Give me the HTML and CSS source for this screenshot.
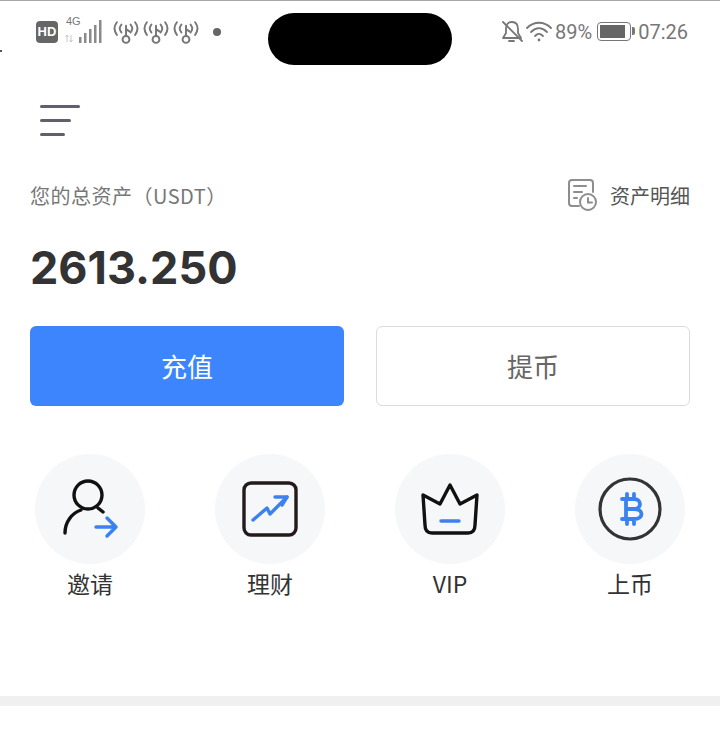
FILE: index.html

```html
<!DOCTYPE html>
<html lang="zh-CN">
<head>
  <meta charset="UTF-8" />
  <meta name="viewport" content="width=device-width, initial-scale=1" />
  <title>资产</title>
  <link rel="stylesheet" href="styles.css">
</head>
<body>
  <div class="statusbar">
    <div class="status-left">
      <span class="hd">HD</span>
      <span class="signal">
        <span class="net">4G</span>
        <svg width="38" height="24" viewBox="0 0 38 24" fill="#8a8a8a">
          <path d="M2 22 L2 15 M0.500 17 L2 15 L3.500 17 M6 15 L6 22 M4.500 20 L6 22 L7.500 20" fill="none" stroke="#c8c8c8" stroke-width="1"/>
          <rect x="14" y="17" width="2.500" height="6"/>
          <rect x="19" y="13" width="2.500" height="10"/>
          <rect x="24" y="9" width="2.500" height="14"/>
          <rect x="29" y="5" width="2.500" height="18"/>
          <rect x="34" y="0" width="2.500" height="23"/>
        </svg>
      </span>
      <span class="hotspots">
        <svg class="hotspot" viewBox="0 0 26 24"><use href="#hotspot"/></svg>
        <svg class="hotspot" viewBox="0 0 26 24"><use href="#hotspot"/></svg>
        <svg class="hotspot" viewBox="0 0 26 24"><use href="#hotspot"/></svg>
      </span>
      <span class="dot"></span>
    </div>
    <div class="status-right">
      <svg width="24" height="24" viewBox="0 0 24 24" fill="none" stroke="#777" stroke-width="1.800" stroke-linecap="round" stroke-linejoin="round">
        <path d="M5 8 C5 5 7 2 11 2 C15 2 17 5 17 9 L17 13 L20 18 L2 18 L5 13 Z"/>
        <path d="M8 21 L13 21"/>
        <path d="M2 2 L21 21"/>
      </svg>
      <svg class="wifi" width="26" height="22" viewBox="0 0 26 22" fill="none" stroke="#777" stroke-width="1.800" stroke-linecap="round">
        <path d="M1 7 C8 0 18 0 25 7"/>
        <path d="M5 11 C10 6 16 6 21 11"/>
        <path d="M9 15 C12 12 14 12 17 15"/>
        <circle cx="13" cy="19" r="1.400" fill="#777" stroke="none"/>
      </svg>
      <span class="pct">89%</span>
      <span class="battery"><span class="battery-fill"></span></span>
      <span class="time">07:26</span>
    </div>
  </div>
  <div class="notch"></div>
  <span class="speck"></span>

  <svg class="defs" width="0" height="0">
    <symbol id="hotspot" viewBox="2 2 22 21">
      <g fill="none" stroke="#777" stroke-width="1.700" stroke-linecap="round">
        <path d="M5 4 C2 8 2 11 5 15"/>
        <path d="M9 6 C7 9 7 10 9 13"/>
        <path d="M21 4 C24 8 24 11 21 15"/>
        <path d="M17 6 C19 9 19 10 17 13"/>
        <path d="M13 7 L13 16"/>
        <path d="M13 10 L16 12"/>
        <circle cx="13" cy="19" r="3"/>
      </g>
    </symbol>
  </svg>

  <div class="page">
    <div class="menu-btn">
      <span class="line line-1"></span>
      <span class="line line-2"></span>
      <span class="line line-3"></span>
    </div>

    <div class="asset-head">
      <span class="asset-label">您的总资产（USDT）</span>
      <span class="asset-detail">
        <svg width="32" height="32" viewBox="0 0 32 32" fill="none" stroke="#8e8e8e" stroke-width="2" stroke-linecap="round">
          <path d="M11 27 L4 27 C2 27 1 26 1 24 L1 4 C1 2 2 1 4 1 L22 1 C24 1 25 2 25 4 L25 13"/>
          <path d="M6 7 L18 7"/>
          <path d="M6 13 L14 13"/>
          <path d="M6 19 L9 19"/>
          <circle cx="20" cy="23" r="8"/>
          <path d="M20 19 L20 23.500 L24 23.500"/>
        </svg>
        资产明细
      </span>
    </div>

    <div class="total">2613.250</div>

    <div class="actions">
      <a class="btn btn-primary">充值</a>
      <a class="btn btn-outline">提币</a>
    </div>

    <div class="shortcuts">
      <div class="shortcut">
        <div class="circle">
          <svg width="60" height="60" viewBox="0 0 60 60" fill="none" stroke-width="3.400" stroke-linecap="round" stroke-linejoin="round">
            <circle cx="28" cy="16" r="14" stroke="#111"/>
            <path d="M5 54 C5 43 12 34 21 31" stroke="#111"/>
            <path d="M38 29 L43 33" stroke="#111"/>
            <path d="M36 48 L56 48 M47 39 L56 48 L47 57" stroke="#3b82f0"/>
          </svg>
        </div>
        <span class="shortcut-name">邀请</span>
      </div>
      <div class="shortcut">
        <div class="circle">
          <svg width="56" height="56" viewBox="0 0 56 56" fill="none" stroke-width="3.400" stroke-linecap="round" stroke-linejoin="round">
            <rect x="2" y="2" width="52" height="52" rx="7" stroke="#241a1a"/>
            <path d="M11 39 L25 27 L28 33 L45 16" stroke="#3b82f0"/>
            <path d="M33 16 L45 16 L40 24" stroke="#3b82f0"/>
          </svg>
        </div>
        <span class="shortcut-name">理财</span>
      </div>
      <div class="shortcut">
        <div class="circle">
          <svg width="60" height="56" viewBox="0 0 60 56" fill="none" stroke-width="3.400" stroke-linecap="round" stroke-linejoin="round">
            <path d="M3 14 L20 23 L30 4 L40 23 L57 14 L55 44 C55 50 52 52 48 52 L12 52 C8 52 5 50 5 44 Z" stroke="#111"/>
            <path d="M21 40 L39 40" stroke="#3b82f0"/>
          </svg>
        </div>
        <span class="shortcut-name">VIP</span>
      </div>
      <div class="shortcut">
        <div class="circle">
          <svg width="64" height="64" viewBox="0 0 64 64" fill="none" stroke-width="3.200" stroke-linecap="round" stroke-linejoin="round">
            <circle cx="32" cy="32" r="30" stroke="#333"/>
            <path d="M24 22 L36 22 C44 22 44 32 36 32 L28 32 M36 32 C46 32 46 42 36 42 L24 42 M28 22 L28 42 M29 17 L29 22 M36 17 L36 22 M29 42 L29 47 M36 42 L36 47" stroke="#3b82f0" stroke-width="3.800"/>
          </svg>
        </div>
        <span class="shortcut-name">上币</span>
      </div>
    </div>
  </div>

  <div class="divider"></div>
</body>
</html>
```

FILE: styles.css

```css
* {
  box-sizing: border-box;
}

body {
  margin: 0;
  background: #fff;
  font-family: "Noto Sans CJK SC", "Noto Sans", sans-serif;
  color: #333;
  overflow: hidden;
  height: 734px;
  position: relative;
}

.defs {
  position: absolute;
}

.statusbar {
  height: 64px;
  border-top: 1px solid #a8a8a8;
  display: flex;
  justify-content: space-between;
  align-items: center;
  padding: 0 32px 2px 36px;
  color: #777;
}

.status-left,
.status-right {
  display: flex;
  align-items: center;
}

.hd {
  width: 22px;
  height: 22px;
  background: #666;
  color: #fff;
  border-radius: 4px;
  font-family: "Liberation Sans", sans-serif;
  font-size: 13px;
  font-weight: bold;
  line-height: 22px;
  text-align: center;
}

.signal {
  position: relative;
  margin-left: 7px;
  width: 38px;
  height: 24px;
}

.net {
  position: absolute;
  left: 1px;
  top: -5px;
  font-family: "Liberation Sans", sans-serif;
  font-size: 11px;
  color: #777;
}

.hotspots {
  display: flex;
  gap: 4px;
  margin-left: 10px;
}

.hotspot {
  width: 26px;
  height: 24px;
}

.dot {
  width: 8px;
  height: 8px;
  border-radius: 50%;
  background: #666;
  margin-left: 14px;
}

.wifi {
  margin-left: 1px;
}

.pct,
.time {
  font-family: "Roboto", sans-serif;
  font-size: 20px;
  color: #777;
}

.pct {
  margin-left: 3px;
}

.battery {
  position: relative;
  width: 34px;
  height: 19px;
  margin-left: 5px;
  border: 1.500px solid #777;
  border-radius: 4px;
  padding: 2px;
  margin-right: 7px;
}

.battery::after {
  content: "";
  position: absolute;
  right: -5px;
  top: 4px;
  width: 3px;
  height: 8px;
  background: #777;
  border-radius: 0 2px 2px 0;
}

.battery-fill {
  display: block;
  width: 89%;
  height: 100%;
  background: #666;
}

.notch {
  position: absolute;
  left: 268px;
  top: 13px;
  width: 184px;
  height: 52px;
  background: #000;
  border-radius: 26px;
}

.speck {
  position: absolute;
  left: 0;
  top: 50px;
  width: 2px;
  height: 2px;
  background: #555;
}

.page {
  padding: 0 30px;
}

.menu-btn {
  margin: 41px 0 0 10px;
  width: 40px;
  display: flex;
  flex-direction: column;
  gap: 11px;
}

.line {
  display: block;
  height: 3px;
  border-radius: 2px;
  background: #60606c;
}

.line-1 {
  width: 40px;
}

.line-2 {
  width: 31px;
}

.line-3 {
  width: 25px;
}

.asset-head {
  display: flex;
  justify-content: space-between;
  align-items: center;
  margin-top: 42px;
  height: 34px;
}

.asset-label {
  font-size: 20px;
  letter-spacing: 0.500px;
  color: #777;
}

.asset-detail {
  display: flex;
  align-items: center;
  gap: 10px;
  font-size: 20px;
  color: #555;
}

.total {
  margin-top: 29px;
  font-family: "Inter", "Noto Sans", sans-serif;
  font-size: 45px;
  font-weight: 700;
  line-height: 54px;
  color: #333;
}

.actions {
  display: flex;
  gap: 32px;
  margin-top: 31px;
}

.btn {
  width: 314px;
  height: 80px;
  border-radius: 6px;
  font-size: 26px;
  line-height: 80px;
  text-align: center;
}

.btn-primary {
  background: #3d85fd;
  color: #fff;
}

.btn-outline {
  background: #fff;
  border: 1px solid #dcdcdc;
  line-height: 78px;
  color: #666;
}

.shortcuts {
  display: flex;
  justify-content: space-between;
  padding: 0 5px;
  margin-top: 48px;
}

.shortcut {
  width: 110px;
  display: flex;
  flex-direction: column;
  align-items: center;
}

.circle {
  width: 110px;
  height: 110px;
  border-radius: 50%;
  background: #f6f7f9;
  display: flex;
  align-items: center;
  justify-content: center;
}

.shortcut-name {
  margin-top: 2px;
  font-size: 23px;
  line-height: 34px;
  color: #333;
}

.divider {
  position: absolute;
  left: 0;
  right: 0;
  top: 696px;
  height: 10px;
  background: #f0f0f0;
}
```
